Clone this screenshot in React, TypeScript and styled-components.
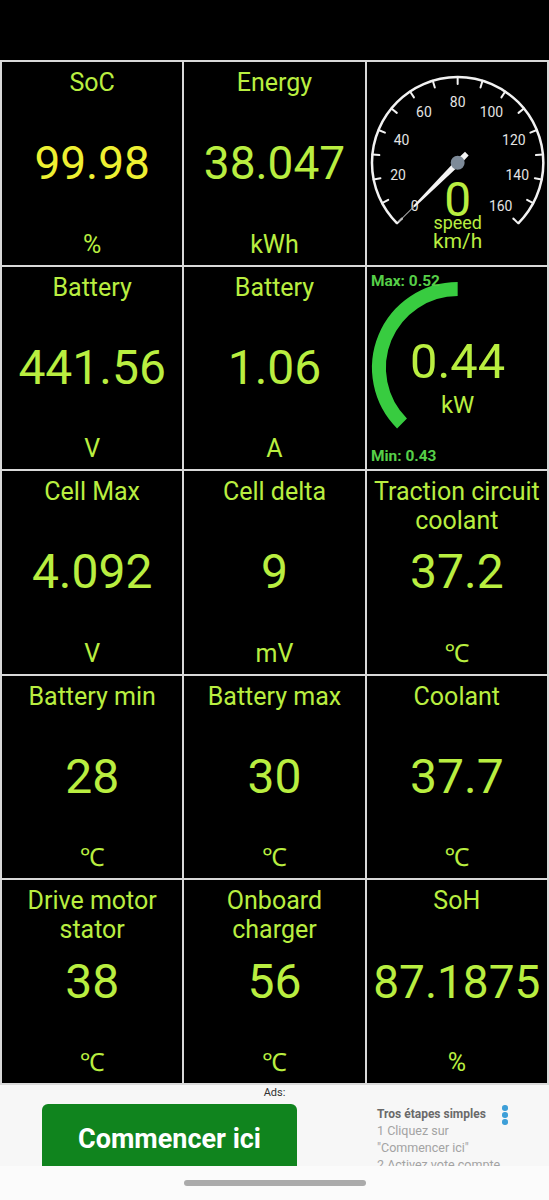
import React from "react";
import styled, { createGlobalStyle } from "styled-components";

const LIME = "#b9ee40";
const YELLOW = "#eef032";

const GlobalStyle = createGlobalStyle`
  html, body { margin: 0; padding: 0; background: #000; }
  body { font-family: Roboto, "Noto Sans", "DejaVu Sans", sans-serif; }
  * { box-sizing: border-box; }
`;

const Screen = styled.div`
  width: 549px;
  height: 1200px;
  display: flex;
  flex-direction: column;
  background: #f6f6f6;
  position: relative;
  overflow: hidden;
`;

const StatusBar = styled.div`
  height: 60px;
  flex: none;
  background: #000;
`;

const Dashboard = styled.main`
  height: 1025px;
  flex: none;
  display: grid;
  grid-template-columns: repeat(3, 1fr);
  grid-template-rows: repeat(5, 1fr);
  gap: 2px;
  padding: 2px;
  background: #d9d9d9;
`;

const Tile = styled.section`
  background: #000;
  min-width: 0;
  overflow: hidden;
  display: grid;
  grid-template-rows: 1fr auto 1fr;
  padding: 6px 3px;
  text-align: center;
  color: ${LIME};
`;

const Title = styled.div`
  align-self: start;
  font-size: 25px;
  line-height: 29px;
  white-space: pre-line;
`;

const Value = styled.div<{ $color?: string; $size?: number }>`
  font-size: ${(p) => p.$size ?? 48}px;
  line-height: 48px;
  white-space: nowrap;
  color: ${(p) => p.$color ?? LIME};
`;

const Unit = styled.div`
  align-self: end;
  font-size: 25px;
  line-height: 29px;
`;

const GaugeTile = styled.section`
  background: #000;
  min-width: 0;
  overflow: hidden;
`;

const GaugeSvg = styled.svg`
  display: block;
  width: 100%;
  height: 100%;
  font-family: Roboto, "Noto Sans", sans-serif;
`;

const AdArea = styled.aside`
  flex: 1;
  position: relative;
  overflow: hidden;
  background: #f7f7f7;
`;

const AdLabel = styled.div`
  padding-top: 1px;
  text-align: center;
  font-size: 11px;
  line-height: 14px;
  color: #333;
`;

const AdRow = styled.div`
  display: flex;
  align-items: flex-start;
  margin-top: 4px;
  padding-left: 42px;
`;

const CtaButton = styled.button`
  width: 255px;
  height: 70px;
  flex: none;
  border: none;
  border-radius: 6px;
  background: #10841e;
  color: #fff;
  font-family: Roboto, sans-serif;
  font-weight: 700;
  font-size: 27px;
  padding: 0;
`;

const AdCopy = styled.div`
  width: 118px;
  margin-left: 80px;
  margin-top: 2px;
`;

const AdHeading = styled.div`
  font-size: 12px;
  line-height: 16px;
  font-weight: 700;
  color: #6a6a6a;
  white-space: nowrap;
`;

const AdLine = styled.div`
  font-size: 12.5px;
  line-height: 17px;
  color: #a3a3a3;
  white-space: nowrap;
`;

const Kebab = styled.div`
  display: flex;
  flex-direction: column;
  gap: 1.5px;
  margin-left: 7px;
  margin-top: 1px;
`;

const Dot = styled.span`
  width: 5.5px;
  height: 5.5px;
  border-radius: 50%;
  background: #3e9fd8;
`;

const NavBar = styled.div`
  position: absolute;
  left: 0;
  right: 0;
  bottom: 0;
  height: 34px;
  background: #fbfbfb;
  display: flex;
  align-items: center;
  justify-content: center;
`;

const NavPill = styled.span`
  width: 182px;
  height: 6px;
  border-radius: 3px;
  background: #ababab;
`;

type Metric = {
  title: string;
  value: string;
  unit: string;
  color?: string;
  size?: number;
};

const MetricTile = ({ title, value, unit, color, size }: Metric) => (
  <Tile>
    <Title>{title}</Title>
    <Value $color={color} $size={size}>
      {value}
    </Value>
    <Unit>{unit}</Unit>
  </Tile>
);

const CX = 91;
const CY = 101;

const angleOf = (v: number, max: number) =>
  ((225 - (v / max) * 270) * Math.PI) / 180;
const pt = (r: number, a: number, cy = CY) => [
  CX + r * Math.cos(a),
  cy - r * Math.sin(a),
];

const SpeedGauge = () => {
  const R = 86;
  const [sx, sy] = pt(R, angleOf(0, 160));
  const [ex, ey] = pt(R, angleOf(160, 160));
  const ticks = Array.from({ length: 17 }, (_, i) => i * 10);
  const labels = Array.from({ length: 9 }, (_, i) => i * 20);
  return (
    <GaugeSvg viewBox="0 0 181 203">
      <path
        d={`M ${sx} ${sy} A ${R} ${R} 0 1 1 ${ex} ${ey}`}
        fill="none"
        stroke="#f2f2f2"
        strokeWidth={2.5}
      />
      {ticks.map((v) => {
        const a = angleOf(v, 160);
        const [x1, y1] = pt(R, a);
        const [x2, y2] = pt(R - 7, a);
        return (
          <line
            key={v}
            x1={x1}
            y1={y1}
            x2={x2}
            y2={y2}
            stroke="#f2f2f2"
            strokeWidth={2}
            strokeLinecap="round"
          />
        );
      })}
      {labels.map((v) => {
        const [x, y] = pt(61, angleOf(v, 160));
        return (
          <text
            key={v}
            x={x}
            y={y + 5}
            fill="#e4e4e4"
            fontSize={14}
            textAnchor="middle"
          >
            {v}
          </text>
        );
      })}
      <g transform={`translate(${CX} ${CY}) rotate(135)`}>
        <line x1={60} y1={0} x2={84} y2={0} stroke="#a8a8a8" strokeWidth={1} />
        <polygon
          points="-13,-2.6 0,-3 62,-1 62,1 0,3 -13,2.6"
          fill="#f4f4f4"
        />
        <circle cx={0} cy={0} r={7} fill="#7d8a98" />
      </g>
      <text x={CX} y={154} fill={LIME} fontSize={48} textAnchor="middle">
        0
      </text>
      <text x={CX} y={167} fill={LIME} fontSize={18} textAnchor="middle">
        speed
      </text>
      <text x={CX} y={187} fill={LIME} fontSize={21} textAnchor="middle">
        km/h
      </text>
    </GaugeSvg>
  );
};

const PowerGauge = () => {
  const R = 79;
  const [sx, sy] = pt(R, angleOf(0, 1));
  const [ex, ey] = pt(R, (90 * Math.PI) / 180);
  return (
    <GaugeSvg viewBox="0 0 181 203">
      <path
        d={`M ${sx} ${sy} A ${R} ${R} 0 0 1 ${ex} ${ey}`}
        fill="none"
        stroke="#38cc40"
        strokeWidth={14}
      />
      <text x={4} y={19} fill="#56cf48" fontSize={15.5} fontWeight={700}>
        Max: 0.52
      </text>
      <text x={4} y={195} fill="#56cf48" fontSize={15.5} fontWeight={700}>
        Min: 0.43
      </text>
      <text x={CX} y={111} fill={LIME} fontSize={49} textAnchor="middle">
        0.44
      </text>
      <text x={CX} y={146} fill={LIME} fontSize={24} textAnchor="middle">
        kW
      </text>
    </GaugeSvg>
  );
};

const App = () => (
  <>
    <GlobalStyle />
    <Screen>
      <StatusBar />
      <Dashboard>
        <MetricTile title="SoC" value="99.98" unit="%" color={YELLOW} size={46} />
        <MetricTile title="Energy" value="38.047" unit="kWh" size={46} />
        <GaugeTile>
          <SpeedGauge />
        </GaugeTile>

        <MetricTile title="Battery" value="441.56" unit="V" />
        <MetricTile title="Battery" value="1.06" unit="A" />
        <GaugeTile>
          <PowerGauge />
        </GaugeTile>

        <MetricTile title="Cell Max" value="4.092" unit="V" />
        <MetricTile title="Cell delta" value="9" unit="mV" />
        <MetricTile title={"Traction circuit\ncoolant"} value="37.2" unit="℃" />

        <MetricTile title="Battery min" value="28" unit="℃" />
        <MetricTile title="Battery max" value="30" unit="℃" />
        <MetricTile title="Coolant" value="37.7" unit="℃" />

        <MetricTile title={"Drive motor\nstator"} value="38" unit="℃" />
        <MetricTile title={"Onboard\ncharger"} value="56" unit="℃" />
        <MetricTile title="SoH" value="87.1875" unit="%" size={46} />
      </Dashboard>
      <AdArea>
        <AdLabel>Ads:</AdLabel>
        <AdRow>
          <CtaButton>Commencer ici</CtaButton>
          <AdCopy>
            <AdHeading>Tros étapes simples</AdHeading>
            <AdLine>1 Cliquez sur</AdLine>
            <AdLine>"Commencer ici"</AdLine>
            <AdLine>2 Activez vote compte</AdLine>
          </AdCopy>
          <Kebab>
            <Dot />
            <Dot />
            <Dot />
          </Kebab>
        </AdRow>
        <NavBar>
          <NavPill />
        </NavBar>
      </AdArea>
    </Screen>
  </>
);

export default App;
